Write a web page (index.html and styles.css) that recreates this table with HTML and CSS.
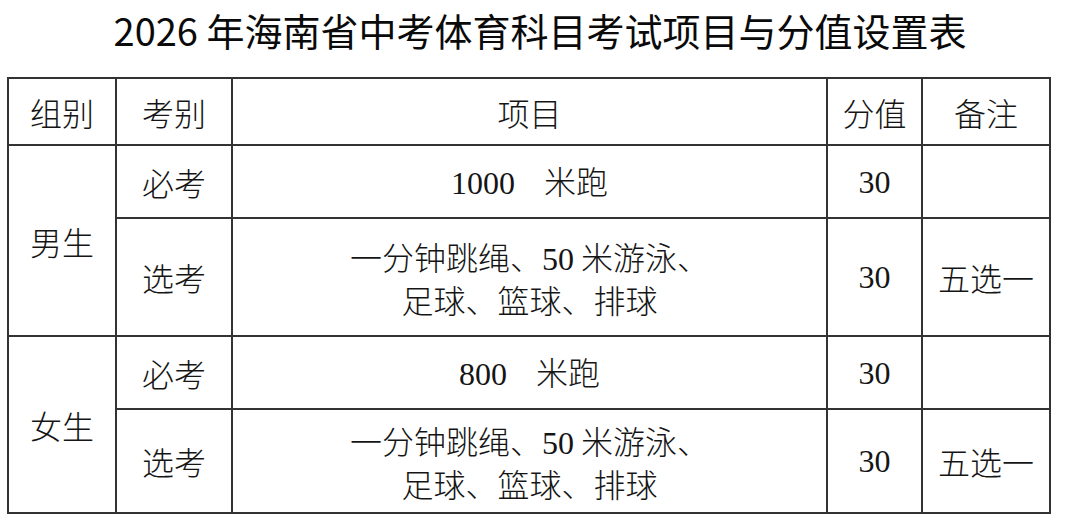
FILE: index.html
```html
<!DOCTYPE html>
<html lang="zh-CN">
<head>
<meta charset="utf-8">
<title>2026 年海南省中考体育科目考试项目与分值设置表</title>
<link rel="stylesheet" href="styles.css">
</head>
<body>
<div class="page">
  <h1 class="title">2026 年海南省中考体育科目考试项目与分值设置表</h1>
  <table class="score-table">
    <colgroup>
      <col class="c-group">
      <col class="c-type">
      <col class="c-item">
      <col class="c-score">
      <col class="c-note">
    </colgroup>
    <thead>
      <tr class="r-head">
        <th>组别</th>
        <th>考别</th>
        <th>项目</th>
        <th>分值</th>
        <th>备注</th>
      </tr>
    </thead>
    <tbody>
      <tr class="r-must">
        <td rowspan="2">男生</td>
        <td>必考</td>
        <td class="item-run"><span class="num">1000</span> 米跑</td>
        <td class="num">30</td>
        <td></td>
      </tr>
      <tr class="r-opt-a">
        <td>选考</td>
        <td class="item-multi">一分钟跳绳、<span class="num">50</span> 米游泳、<br>足球、篮球、排球</td>
        <td class="num">30</td>
        <td>五选一</td>
      </tr>
      <tr class="r-must">
        <td rowspan="2">女生</td>
        <td>必考</td>
        <td class="item-run"><span class="num">800</span> 米跑</td>
        <td class="num">30</td>
        <td></td>
      </tr>
      <tr class="r-opt-b">
        <td>选考</td>
        <td class="item-multi">一分钟跳绳、<span class="num">50</span> 米游泳、<br>足球、篮球、排球</td>
        <td class="num">30</td>
        <td>五选一</td>
      </tr>
    </tbody>
  </table>
</div>
</body>
</html>
```

FILE: styles.css
```css
html, body {
  margin: 0;
  padding: 0;
  background: #ffffff;
}

body {
  width: 1080px;
  height: 519px;
  overflow: hidden;
  color: #111111;
  font-family: "Noto Sans CJK SC", "Noto Sans", sans-serif;
}

.page {
  padding-left: 7px;
}

.title {
  margin: 0;
  height: 77px;
  line-height: 60px;
  font-size: 38px;
  font-weight: 400;
  text-align: center;
  color: #0a0a0a;
  padding-right: 7px;
}

.score-table {
  border-collapse: collapse;
  table-layout: fixed;
  width: 1044px;
  font-family: "Liberation Serif", "Noto Sans CJK SC", serif;
  font-size: 32px;
  color: #151515;
}

.c-group { width: 108px; }
.c-type { width: 116px; }
.c-item { width: 595px; }
.c-score { width: 95px; }
.c-note { width: 128px; }

.score-table th,
.score-table td {
  border: 2px solid #333333;
  padding: 0;
  text-align: center;
  vertical-align: middle;
  font-weight: 300;
  font-family: "Noto Sans CJK SC", sans-serif;
  line-height: 40px;
}

.score-table .num {
  font-family: "Liberation Serif", serif;
  font-weight: 400;
}

.item-run {
  word-spacing: 22px;
}

.r-head { height: 67px; }
.r-must { height: 73px; }
.r-opt-a { height: 118px; }
.r-opt-b { height: 104px; }

.r-must + .r-opt-b,
.r-opt-b { height: 104px; }
```
